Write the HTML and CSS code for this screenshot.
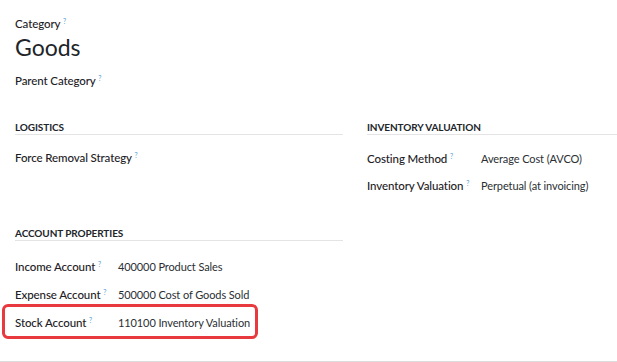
FILE: index.html
```html
<!DOCTYPE html>
<html lang="en">
<head>
    <meta charset="UTF-8">
    <meta name="viewport" content="width=device-width, initial-scale=1.0">
    <title>Product Category</title>
    <link rel="stylesheet" href="styles.css">
</head>
<body>
    <div class="sheet">
        <div class="title-block">
            <div class="field-label">Category <sup class="help">?</sup></div>
            <h1 class="record-name">Goods</h1>
            <div class="field-label parent">Parent Category <sup class="help">?</sup></div>
        </div>

        <div class="groups">
            <div class="group logistics">
                <div class="group-title">Logistics</div>
                <div class="row">
                    <span class="row-label">Force Removal Strategy <sup class="help">?</sup></span>
                    <span class="row-value"></span>
                </div>
            </div>
            <div class="group valuation">
                <div class="group-title">Inventory Valuation</div>
                <div class="row">
                    <span class="row-label">Costing Method <sup class="help">?</sup></span>
                    <span class="row-value">Average Cost (AVCO)</span>
                </div>
                <div class="row">
                    <span class="row-label">Inventory Valuation <sup class="help">?</sup></span>
                    <span class="row-value">Perpetual (at invoicing)</span>
                </div>
            </div>
            <div class="group accounts">
                <div class="group-title">Account Properties</div>
                <div class="row">
                    <span class="row-label">Income Account <sup class="help">?</sup></span>
                    <span class="row-value">400000 Product Sales</span>
                </div>
                <div class="row">
                    <span class="row-label">Expense Account <sup class="help">?</sup></span>
                    <span class="row-value">500000 Cost of Goods Sold</span>
                </div>
                <div class="row highlighted">
                    <span class="row-label">Stock Account <sup class="help">?</sup></span>
                    <span class="row-value">110100 Inventory Valuation</span>
                </div>
            </div>
        </div>
    </div>
</body>
</html>
```

FILE: styles.css
```css
html, body {
    margin: 0;
    padding: 0;
    background: white;
}
body {
    font-family: "Lato", "Liberation Sans", sans-serif;
    font-size: 11px;
    letter-spacing: -0.1px;
    color: #212529;
    width: 617px;
    height: 362px;
    overflow: hidden;
}
.sheet {
    box-sizing: border-box;
    padding: 16px 0 0 15px;
    height: 362px;
    border-bottom: 1px solid #dcdcdc;
}
.field-label {
    line-height: 16px;
    font-size: 11.5px;
    font-weight: 500;
    color: #1d2125;
}
.help {
    font-size: 7px;
    color: #5a9fd6;
    vertical-align: top;
    position: relative;
    top: -3px;
    font-weight: normal;
}
.record-name {
    font-size: 23px;
    font-weight: normal;
    letter-spacing: 0;
    margin: 1px 0 12px;
    line-height: 28px;
}
.groups {
    display: grid;
    grid-template-columns: 328px 1fr;
    column-gap: 24px;
    margin-top: 31px;
}
.group-title {
    font-size: 10px;
    font-weight: bold;
    text-transform: uppercase;
    line-height: 14px;
    border-bottom: 1px solid #e4e4e4;
}
.row {
    display: flex;
    line-height: 16px;
    margin-top: 12px;
}
.row-label {
    min-width: 103px;
    flex: none;
    white-space: nowrap;
    font-weight: 500;
    font-size: 11.5px;
    color: #1d2125;
}
.row-value {
    color: #2b2f33;
}
.logistics .group-title + .row {
    margin-top: 15px;
}
.valuation .row-label {
    min-width: 114px;
}
.valuation .group-title + .row {
    margin-top: 16px;
}
.valuation .row + .row {
    margin-top: 11px;
}
.accounts {
    margin-top: 32px;
}
.accounts .group-title + .row {
    margin-top: 18px;
}
.highlighted {
    position: relative;
}
.highlighted::after {
    content: "";
    position: absolute;
    box-sizing: border-box;
    left: -13px;
    top: -11px;
    width: 256px;
    height: 35px;
    border: 3px solid #e8393f;
    border-radius: 6px;
}
```
